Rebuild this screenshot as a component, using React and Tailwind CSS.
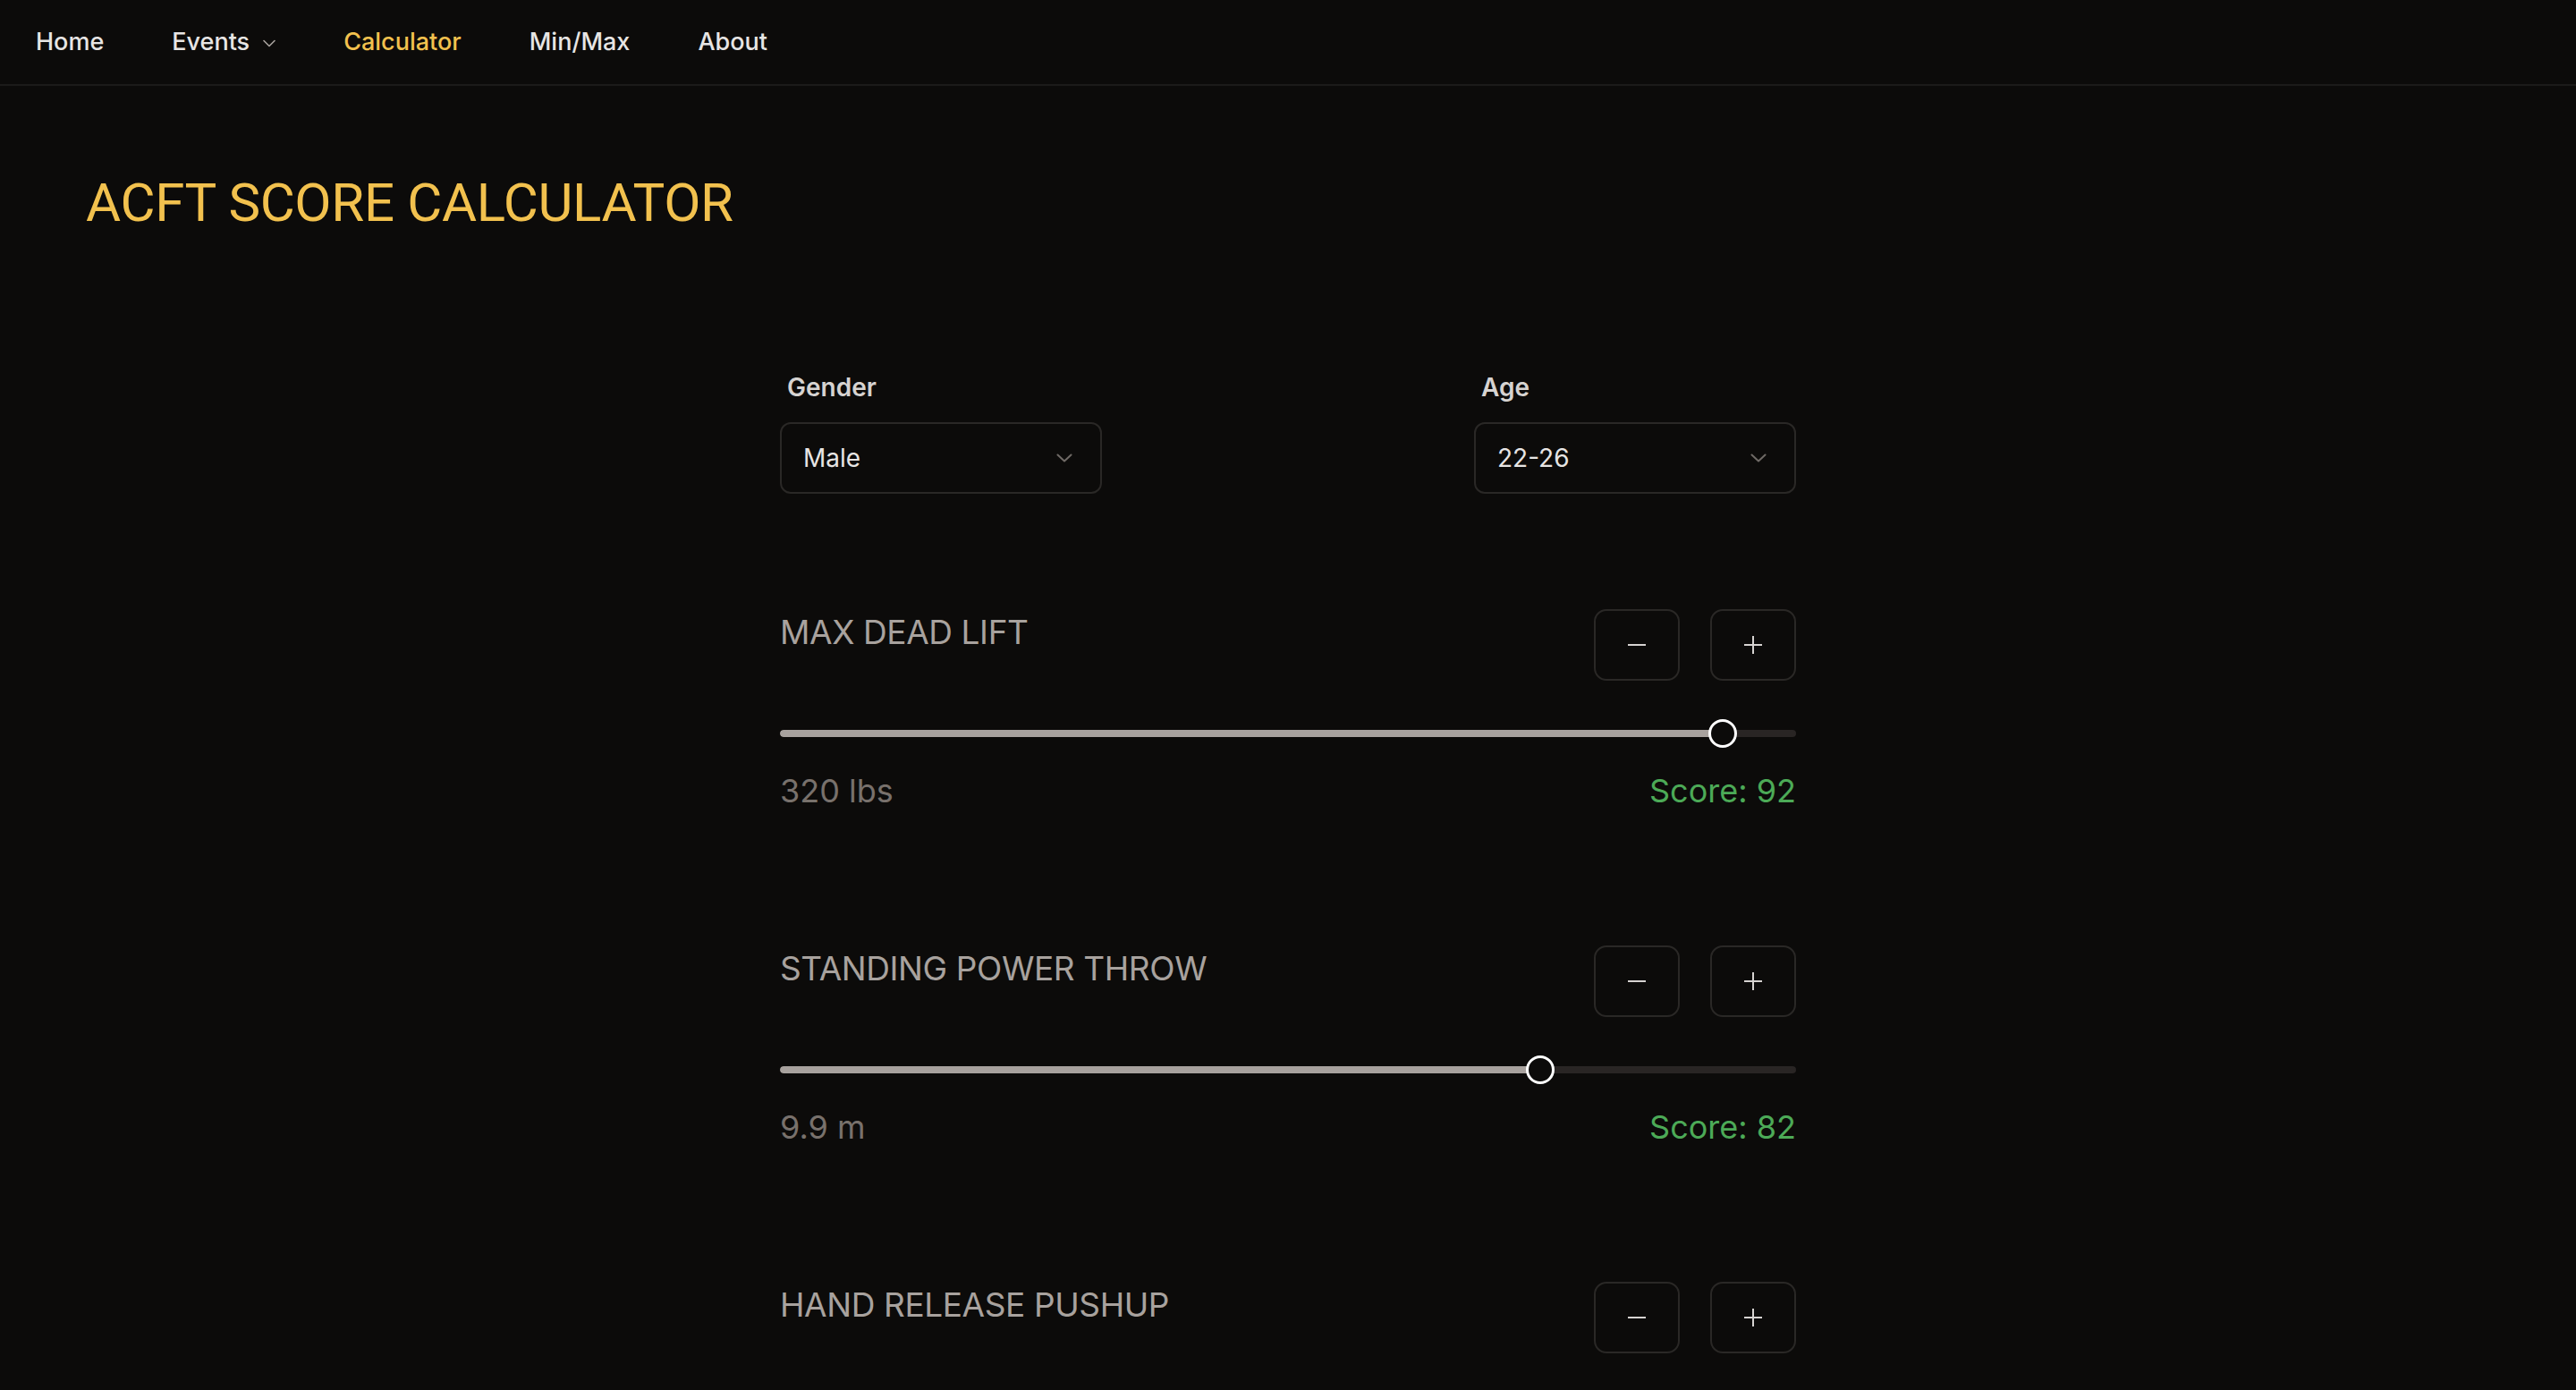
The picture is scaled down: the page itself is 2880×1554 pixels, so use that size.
import { useState } from 'react'

const NAV = ['Home', 'Events', 'Calculator', 'Min/Max', 'About']

const EVENTS = [
  { id: 'mdl', name: 'MAX DEAD LIFT', value: '320 lbs', score: 92, pct: 92.8 },
  { id: 'spt', name: 'STANDING POWER THROW', value: '9.9 m', score: 82, pct: 74.8 },
  { id: 'hrp', name: 'HAND RELEASE PUSHUP', value: '40 reps', score: 80, pct: 60 },
]

function SmallChevron() {
  return (
    <svg width="14" height="9" viewBox="0 0 14 9" fill="none" className="ml-[15px] mt-[2px]">
      <path d="M1 1.5l6 6 6-6" stroke="#a8a29e" strokeWidth="1.6" strokeLinecap="round" strokeLinejoin="round" />
    </svg>
  )
}

function SelectBox({ label, value }) {
  return (
    <div className="flex flex-col w-[360px]">
      <span className="pl-2 text-[28px] leading-[28px] font-semibold text-[#d6d3d1]">{label}</span>
      <button className="mt-[25px] h-[80px] w-full flex items-center justify-between pl-6 pr-[31px] rounded-[12px] border-2 border-[#2a2826] bg-[#0c0b0a] text-left">
        <span className="text-[28px] text-[#e7e5e4]">{value}</span>
        <svg width="18" height="10" viewBox="0 0 18 10" fill="none">
          <path d="M1.5 1.5l7.5 7 7.5-7" stroke="#6f6a66" strokeWidth="2" strokeLinecap="round" strokeLinejoin="round" />
        </svg>
      </button>
    </div>
  )
}

function StepButton({ kind }) {
  return (
    <button className="w-[96px] h-[80px] rounded-[14px] border-2 border-[#2a2826] flex items-center justify-center">
      {kind === 'minus' ? (
        <span className="block w-[20px] h-[2px] bg-[#d6d3d1]" />
      ) : (
        <span className="relative block w-[20px] h-[20px]">
          <span className="absolute left-0 top-[9px] w-[20px] h-[2px] bg-[#d6d3d1]" />
          <span className="absolute top-0 left-[9px] w-[2px] h-[20px] bg-[#d6d3d1]" />
        </span>
      )}
    </button>
  )
}

function EventRow({ ev }) {
  return (
    <div className="flex flex-col">
      <div className="flex items-start justify-between">
        <h2 className="text-[37px] leading-[52px] tracking-[-0.4px] text-[#a8a29e]">{ev.name}</h2>
        <div className="flex gap-[34px]">
          <StepButton kind="minus" />
          <StepButton kind="plus" />
        </div>
      </div>
      <div className="relative mt-[43px] h-[32px] flex items-center">
        <div className="w-full h-[8px] rounded-full bg-[#292524] overflow-hidden">
          <div className="h-full rounded-full bg-[#a8a29e]" style={{ width: `${ev.pct}%` }} />
        </div>
        <div
          className="absolute top-0 w-[32px] h-[32px] -translate-x-1/2 rounded-full border-[3px] border-white bg-[#0c0b0a]"
          style={{ left: `${ev.pct}%` }}
        />
      </div>
      <div className="mt-[26px] flex items-center justify-between text-[36px] leading-[44px]">
        <span className="text-[#78716c]">{ev.value}</span>
        <span className="text-[#4caa57]">Score: {ev.score}</span>
      </div>
    </div>
  )
}

export default function App() {
  const [active] = useState('Calculator')

  return (
    <div className="h-screen overflow-hidden bg-[#0c0b0a] font-['Inter',sans-serif]">
      <nav className="h-[96px] border-b-2 border-[#1c1b1a] flex items-center gap-[76px] pl-10 pr-10">
        {NAV.map(item => (
          <a
            key={item}
            className={`flex items-center text-[27px] font-medium ${item === active ? 'text-[#f2c14e]' : 'text-[#e7e5e4]'}`}
          >
            {item}
            {item === 'Events' && <SmallChevron />}
          </a>
        ))}
      </nav>

      <h1 className="pt-[101px] pl-[96px] font-['Roboto',sans-serif] text-[60px] leading-[60px] tracking-[-0.35px] text-[#f2c14e]">
        ACFT SCORE CALCULATOR
      </h1>

      <div className="w-[1136px] mx-auto mt-[162px]">
        <div className="flex justify-between">
          <SelectBox label="Gender" value="Male" />
          <SelectBox label="Age" value="22-26" />
        </div>

        <div className="mt-[129px] flex flex-col gap-[151px]">
          {EVENTS.map(ev => (
            <EventRow key={ev.id} ev={ev} />
          ))}
        </div>
      </div>
    </div>
  )
}
